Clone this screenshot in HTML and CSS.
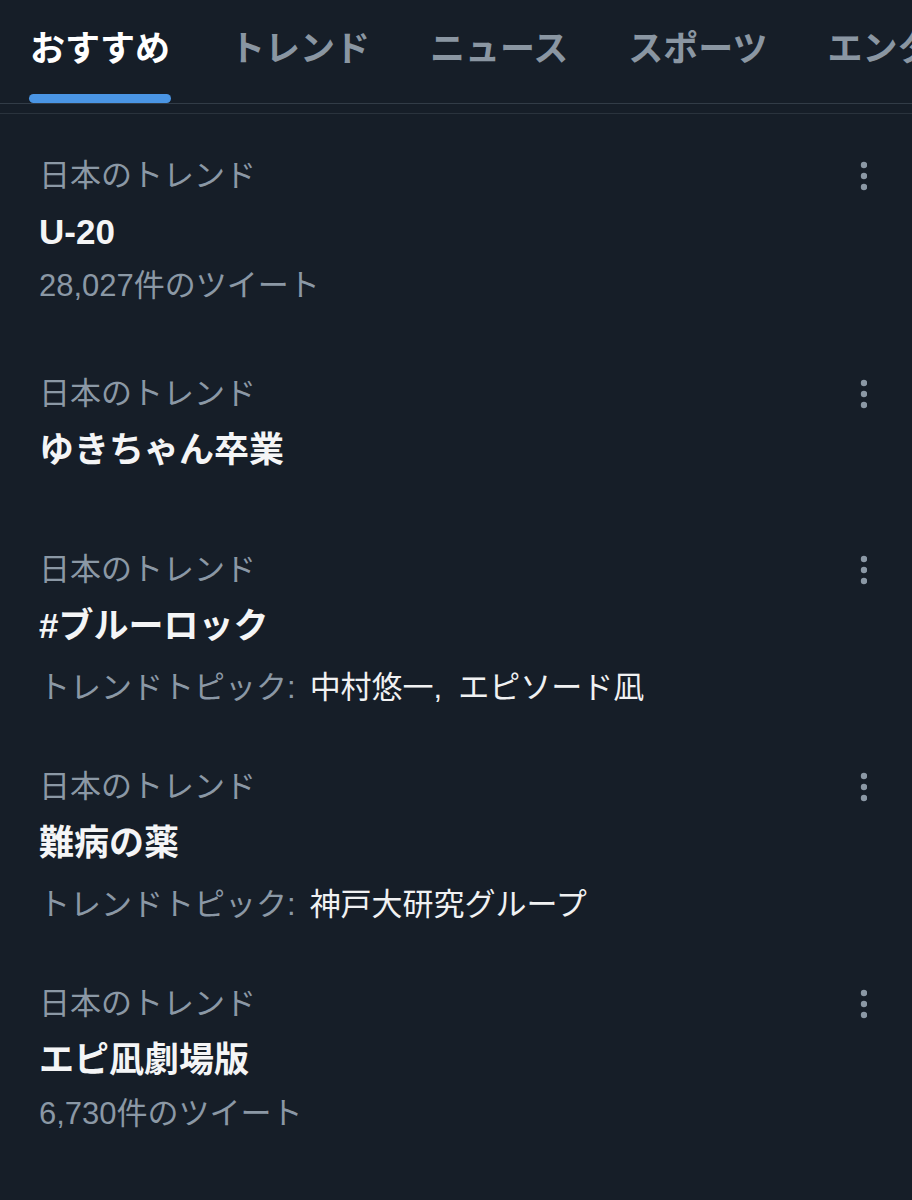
FILE: index.html
```
<!DOCTYPE html>
<html lang="ja">
<head>
<meta charset="utf-8">
<link rel="stylesheet" href="styles.css">
</head>
<body>
<div class="page">
  <nav class="tabs">
    <div class="tab active"><span>おすすめ</span><i class="bar"></i></div>
    <div class="tab"><span>トレンド</span></div>
    <div class="tab"><span>ニュース</span></div>
    <div class="tab"><span>スポーツ</span></div>
    <div class="tab"><span>エンタメ</span></div>
  </nav>
  <div class="rule"></div>

  <section class="item">
    <div class="label-row"><span class="label">日本のトレンド</span><svg class="dots" width="8" height="30" viewBox="0 0 8 30"><circle cx="4" cy="4" r="3.2"/><circle cx="4" cy="15" r="3.2"/><circle cx="4" cy="26" r="3.2"/></svg></div>
    <div class="title">U-20</div>
    <div class="sub">28,027件のツイート</div>
  </section>

  <section class="item nosub">
    <div class="label-row"><span class="label">日本のトレンド</span><svg class="dots" width="8" height="30" viewBox="0 0 8 30"><circle cx="4" cy="4" r="3.2"/><circle cx="4" cy="15" r="3.2"/><circle cx="4" cy="26" r="3.2"/></svg></div>
    <div class="title">ゆきちゃん卒業</div>
  </section>

  <section class="item topic">
    <div class="label-row"><span class="label">日本のトレンド</span><svg class="dots" width="8" height="30" viewBox="0 0 8 30"><circle cx="4" cy="4" r="3.2"/><circle cx="4" cy="15" r="3.2"/><circle cx="4" cy="26" r="3.2"/></svg></div>
    <div class="title">#ブルーロック</div>
    <div class="sub">トレンドトピック:<span class="val">中村悠一,<span class="sep"></span>エピソード凪</span></div>
  </section>

  <section class="item topic">
    <div class="label-row"><span class="label">日本のトレンド</span><svg class="dots" width="8" height="30" viewBox="0 0 8 30"><circle cx="4" cy="4" r="3.2"/><circle cx="4" cy="15" r="3.2"/><circle cx="4" cy="26" r="3.2"/></svg></div>
    <div class="title">難病の薬</div>
    <div class="sub">トレンドトピック:<span class="val">神戸大研究グループ</span></div>
  </section>

  <section class="item">
    <div class="label-row"><span class="label">日本のトレンド</span><svg class="dots" width="8" height="30" viewBox="0 0 8 30"><circle cx="4" cy="4" r="3.2"/><circle cx="4" cy="15" r="3.2"/><circle cx="4" cy="26" r="3.2"/></svg></div>
    <div class="title">エピ凪劇場版</div>
    <div class="sub">6,730件のツイート</div>
  </section>
</div>
</body>
</html>
```
FILE: styles.css
```
html, body {
  margin: 0;
  padding: 0;
  background: #161e28;
}
.page {
  width: 912px;
  height: 1200px;
  overflow: hidden;
  background: #161e28;
  font-family: "Liberation Sans", "Noto Sans CJK JP", sans-serif;
  color: #8b98a5;
}
.tabs {
  display: flex;
  box-sizing: border-box;
  height: 104px;
  border-bottom: 1px solid #323c47;
  white-space: nowrap;
  overflow: hidden;
}
.tab {
  position: relative;
  flex: none;
  padding: 2px 30px 0;
  font-size: 35px;
  font-weight: 700;
  color: #8a96a2;
  line-height: 94px;
}
.tab.active {
  color: #ffffff;
}
.tab .bar {
  position: absolute;
  left: 29px;
  right: 29px;
  top: 94px;
  height: 9px;
  border-radius: 5px;
  background: #4a95e4;
}
.rule {
  height: 1px;
  margin-top: 9px;
  background: #2a333d;
}
.item {
  padding: 42px 45px 26px 39px;
}
.item.nosub {
  padding-bottom: 36px;
}
.item.topic {
  padding-bottom: 17px;
}
.label-row {
  display: flex;
  justify-content: space-between;
  align-items: center;
  height: 40px;
  overflow: hidden;
}
.label {
  font-size: 31px;
  line-height: 40px;
  color: #8b98a5;
}
.dots {
  fill: #8b98a5;
  margin-right: -1px;
}
.title {
  display: flex;
  align-items: center;
  height: 44px;
  margin-top: 14px;
  font-size: 35px;
  font-weight: 700;
  line-height: 44px;
  color: #f4f5f6;
}
.sub {
  display: flex;
  align-items: center;
  height: 40px;
  margin-top: 12px;
  font-size: 31px;
  line-height: 40px;
  color: #8b98a5;
  white-space: pre;
}
.topic .sub {
  margin-top: 20px;
}
.val {
  margin-left: 14px;
  color: #f0f1f2;
}
.sep {
  display: inline-block;
  width: 16px;
}
```
